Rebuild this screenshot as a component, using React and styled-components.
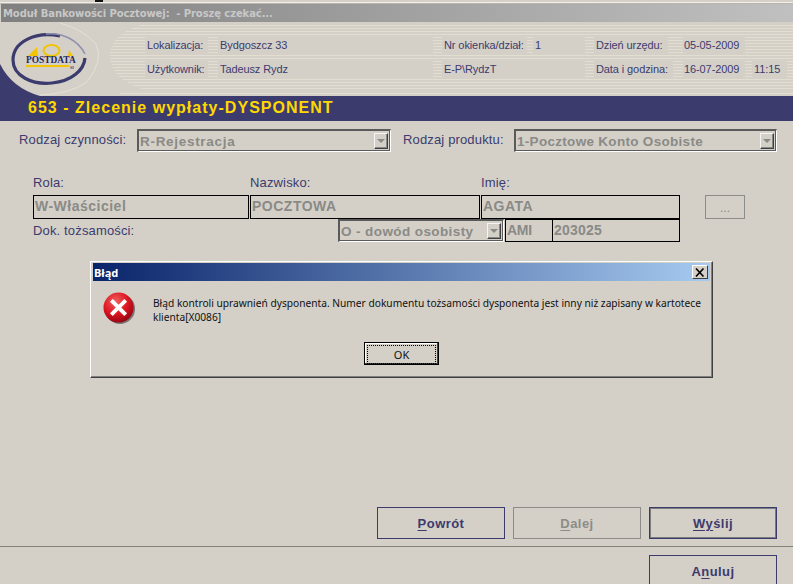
import React from "react";
import styled, { createGlobalStyle } from "styled-components";

const Global = createGlobalStyle`
  html, body { margin: 0; padding: 0; background: #d4d0c8; }
  #root { width: 793px; height: 584px; overflow: hidden; }
`;
const NAVY = "#3c3b6e";
const Page = styled.div`
  position: relative; width: 793px; height: 584px; overflow: hidden; background: #d4d0c8;
  font-family: "Liberation Sans", Arial, sans-serif; color: ${NAVY};
`;
const TopStrip = styled.div`
  position: relative; height: 4px; box-sizing: border-box; border-bottom: 1px solid #b8b5ae;
  background: linear-gradient(#d4d0c8 2px, #f2f0ec 2px);
`;
const StrayMark = styled.i`
  position: absolute; left: 95px; top: 0; width: 8px; height: 2px; background: #111;
`;
const TitleBar = styled.div`
  height: 18px; margin-left: 1px; padding-left: 2px; display: flex; align-items: center;
  background: linear-gradient(90deg, #808080, #c0c0c0);
  font: bold 10px "DejaVu Sans", sans-serif; color: #c8c8c8; white-space: pre; letter-spacing: -0.09px;
`;
const Header = styled.div`
  position: relative; height: 74px; box-sizing: border-box; padding: 15px 0 0 145px;
  display: flex; flex-direction: column; gap: 7px;
`;
const HeaderArt = styled.svg`
  position: absolute; left: 0; top: 0;
`;
const HeaderRow = styled.div`
  position: relative; display: grid; height: 17px; grid-template-columns: ${p => p.$cols}; font-size: 11px; line-height: 16px; letter-spacing: -0.1px;
`;
const Cell = styled.div`
  background: #d4d0c8; padding-left: ${p => p.$pad ?? 2}px; white-space: nowrap; grid-column: ${p => p.$col};
`;
const Banner = styled.div`
  height: 25px; background: ${NAVY}; color: #ffd800; font: bold 16px/24px "Liberation Sans", sans-serif;
  padding-left: 28px; letter-spacing: 1.02px; white-space: pre; box-sizing: border-box;
`;
const Form = styled.div`
  padding-top: 8px;
`;
const TopRow = styled.div`
  display: flex; align-items: center; height: 23px;
`;
const RowLabel = styled.label`
  font-size: 13px; width: ${p => p.$w}px; margin-left: ${p => p.$ml ?? 0}px; white-space: nowrap; padding-bottom: 2px; letter-spacing: 0.15px;
`;
const Select = styled.div`
  width: ${p => p.$w}px; height: 23px; box-sizing: border-box; display: flex; align-items: center; justify-content: space-between;
  border-style: solid; border-width: 2px 1px 1px 2px; border-color: #5a5a5a #fff #fff #5a5a5a;
  box-shadow: inset -1px -1px 0 #5a5a5a;
  color: #8a8a86; font: bold 13.5px "Liberation Sans", sans-serif; padding: 0 1px 0 1px; white-space: nowrap;
  letter-spacing: ${p => p.$ls ?? 0.3}px;
`;
const Arrow = styled.span`
  width: 14px; height: 16px; flex: none; box-sizing: border-box; display: flex; align-items: center; justify-content: center;
  margin-right: 1px; border: 1px solid; border-color: #f4f4f4 #404040 #404040 #f4f4f4; box-shadow: inset -1px -1px 0 #888;
  &::after { content: ""; border: 4px solid transparent; border-top: 4px solid #8a8a86; border-bottom: 0; }
`;
const Person = styled.div`
  margin: 23px 0 0 33px; display: grid; grid-template-columns: 216px 230px 199px 25px 40px; column-gap: 1px; row-gap: 0;
`;
const ColLabel = styled.div`
  font-size: 13px; height: 20px; line-height: 15px; letter-spacing: 0.15px;
`;
const Box = styled.div`
  height: ${p => p.$h ?? 24}px; box-sizing: border-box; border: 1px solid #000; color: #8a8a86;
  font: bold 14px/21px "Liberation Sans", sans-serif; padding-left: 1px; overflow: hidden; white-space: nowrap;
  width: ${p => (p.$w ? `${p.$w}px` : "auto")}; flex: none; letter-spacing: ${p => p.$ls ?? 0.5}px;
  margin-left: ${p => p.$ml ?? 0}px;
`;
const DotsButton = styled.div`
  grid-column: 5; width: 40px; height: 24px; box-sizing: border-box; border: 1px solid #8c8c88; margin-left: -2px;
  text-align: center; color: #8a8a86; font-size: 12px; line-height: 24px;
`;
const Spacer = styled.div``;
const DocRow = styled.div`
  margin-left: 33px; display: flex; align-items: flex-start; height: 23px;
`;
const DocLabel = styled(RowLabel)`
  width: 305px; line-height: 23px; padding: 0;
`;
const Group = styled.div`
  display: flex; margin-left: 1px;
`;
const Actions = styled.div`
  display: flex; justify-content: flex-end; gap: 8px; padding-right: 16px; margin-top: ${p => p.$mt ?? 0}px;
`;
const ActionButton = styled.div`
  width: 128px; height: 32px; box-sizing: border-box; flex: none; display: flex; align-items: center; justify-content: center;
  border: 1px solid ${p => (p.$off ? "#8c8c88" : NAVY)}; color: ${p => (p.$off ? "#8c8c88" : NAVY)};
  font: bold 13px "Liberation Sans", sans-serif; letter-spacing: 0.45px;
  box-shadow: ${p => (p.$main ? "inset 0 0 0 1px #7c7c80" : "none")};
  u { text-underline-offset: 2px; }
`;
const Rule = styled.hr`
  margin: 7px 0 8px; border: 0; border-top: 1px solid #85827a; height: 0; border-bottom: 0;
`;
const Dialog = styled.div`
  position: absolute; left: 90px; top: 261px; width: 623px; height: 117px; box-sizing: border-box; background: #d4d0c8;
  border: 1px solid; border-color: #fff #404040 #404040 #fff;
  box-shadow: inset -1px -1px 0 #808080;
  padding: 1px 2px 3px 1px; font: 11px "Noto Sans", sans-serif; color: #111;
`;
const DialogTitle = styled.div`
  height: 18px; display: flex; align-items: center; justify-content: space-between; padding: 0 2px 0 1px; margin-left: 1px;
  background: linear-gradient(90deg, #0a246a, #a6caf0); color: #fff; font: bold 11px "Noto Sans", sans-serif;
`;
const CloseBtn = styled.div`
  width: 16px; height: 14px; box-sizing: border-box; background: #d4d0c8; display: flex; align-items: center; justify-content: center;
  border: 1px solid; border-color: #fff #404040 #404040 #fff;
`;
const DialogBody = styled.div`
  display: flex; padding: 11px 0 0 11px; height: 52px; box-sizing: border-box;
`;
const DialogText = styled.div`
  margin: 4px 0 0 17px; font-size: 10.2px; line-height: 14px; width: 550px; white-space: nowrap;
`;
const DialogFoot = styled.div`
  display: flex; justify-content: center; margin-top: 9px; padding-left: 1px;
`;
const OkButton = styled.div`
  width: 75px; height: 23px; box-sizing: border-box; border: 1px solid #000; background: #d4d0c8; padding: 1px;
  box-shadow: inset -1px -1px 0 #404040, inset 1px 1px 0 #fff; font-size: 11px;
  span { display: flex; align-items: center; justify-content: center; height: 100%; box-sizing: border-box; margin: 1px; outline: 1px dotted #000; outline-offset: -1px; }
`;

const HeaderDrawing = () => (
  <HeaderArt width="793" height="74" viewBox="0 0 793 74">
    <defs>
      <pattern id="st" width="3" height="3" patternUnits="userSpaceOnUse">
        <rect width="3" height="3" fill="#d4d0c8" />
        <rect width="3" height="1" fill="#e2dfd2" />
      </pattern>
    </defs>
    <rect x="0" width="793" height="74" fill="#d4d0c8" />
    <path d="M148 1 H793 V69 H148 Q110 58 110 34 Q110 10 148 1Z" fill="url(#st)" />
    <rect x="120" y="71" width="673" height="1" fill="#e2dfd2" />
    <path d="M0 42 V74 H40 Q12 66 0 42Z" fill={NAVY} />
    <path d="M60 1 Q84 8 96 22 Q104 38 87 60 Q70 72 40 73" fill="none" stroke="#e4e1d6" strokeWidth="1" />
    <path d="M60 14 C35 9 13 20 13 38 C13 54 32 63 52 61 C72 59 84 48 85 36" fill="none" stroke={NAVY} strokeWidth="3.2" />
    <path d="M46 12 C62 10 78 18 85 32" fill="none" stroke="#8f8fae" strokeWidth="1.5" />
    <path d="M28 34 L37 25 L38 34Z M68 34 L69 28 L73 34Z" fill="#f2c500" />
    <ellipse cx="51.5" cy="28.5" rx="8" ry="5.5" fill="none" stroke="#f2c500" strokeWidth="2" />
    <text x="26" y="41" fontFamily="Liberation Serif" fontWeight="700" fontSize="9.4" fill="#26265e">POSTDATA</text>
    <rect x="26" y="43" width="43" height="2" fill="#f2c500" />
    <text x="70" y="47" fontFamily="Liberation Serif" fontWeight="700" fontSize="4" fill={NAVY}>SI</text>
  </HeaderArt>
);

const ErrorIcon = () => (
  <svg width="33" height="33" viewBox="0 0 34 34">
    <defs>
      <radialGradient id="red" cx="40%" cy="30%" r="75%">
        <stop offset="0" stopColor="#f06060" />
        <stop offset="0.55" stopColor="#dd1522" />
        <stop offset="1" stopColor="#8e0410" />
      </radialGradient>
    </defs>
    <circle cx="17.5" cy="17.5" r="15.5" fill="#777" />
    <circle cx="16" cy="16" r="15.5" fill="url(#red)" />
    <path d="M10 10 L22 22 M22 10 L10 22" stroke="#fff" strokeWidth="4" strokeLinecap="square" />
  </svg>
);

const Top = ({ cols, cells }) => (
  <HeaderRow $cols={cols}>
    {cells.map(([t, col, pad]) => <Cell key={t} $col={col} $pad={pad}>{t}</Cell>)}
  </HeaderRow>
);

export default function App() {
  return (
    <Page>
      <Global />
      <TopStrip><StrayMark /></TopStrip>
      <TitleBar>{"Moduł Bankowości Pocztowej:  - Proszę czekać..."}</TitleBar>
      <Header>
        <HeaderDrawing />
        <Top cols="63px 10px 215px 9px 85px 6px 52px 9px 74px 15px 62px" cells={[
          ["Lokalizacja:", 1], ["Bydgoszcz 33", 3, 2], ["Nr okienka/dział:", 5, 2], ["1", 7, 2], ["Dzień urzędu:", 9, 2], ["05-05-2009", 11, 1],
        ]} />
        <Top cols="63px 10px 215px 9px 143px 9px 79px 10px 62px 7px 35px" cells={[
          ["Użytkownik:", 1], ["Tadeusz Rydz", 3, 2], ["E-P\\RydzT", 5, 2], ["Data i godzina:", 7, 2], ["16-07-2009", 9, 1], ["11:15", 11, 2],
        ]} />
      </Header>
      <Banner>{"653 - Zlecenie wypłaty-DYSPONENT"}</Banner>
      <Form>
        <TopRow>
          <RowLabel $ml={19} $w={118}>Rodzaj czynności:</RowLabel>
          <Select $w={254} $ls={0.7}>R-Rejestracja<Arrow /></Select>
          <RowLabel $ml={12} $w={111}>Rodzaj produktu:</RowLabel>
          <Select $w={263}>1-Pocztowe Konto Osobiste<Arrow /></Select>
        </TopRow>
        <Person>
          <ColLabel>Rola:</ColLabel>
          <ColLabel>Nazwisko:</ColLabel>
          <ColLabel>Imię:</ColLabel>
          <Spacer />
          <Spacer />
          <Box>W-Właściciel</Box>
          <Box>POCZTOWA</Box>
          <Box>AGATA</Box>
          <DotsButton>...</DotsButton>
        </Person>
        <DocRow>
          <DocLabel>Dok. tożsamości:</DocLabel>
          <Select $w={166} $ls={0.4}>O - dowód osobisty<Arrow /></Select>
          <Group>
            <Box $w={48} $h={23} $ls={-0.3}>AMI</Box>
            <Box $w={128} $h={23} $ls={0.2} $ml={-1}>203025</Box>
          </Group>
        </DocRow>
        <Actions $mt={265}>
          <ActionButton><span><u>P</u>owrót</span></ActionButton>
          <ActionButton $off><span><u>D</u>alej</span></ActionButton>
          <ActionButton $main><span><u>Wy</u>ślij</span></ActionButton>
        </Actions>
        <Rule />
        <Actions>
          <ActionButton><span>A<u>n</u>uluj</span></ActionButton>
        </Actions>
      </Form>
      <Dialog>
        <DialogTitle>
          Błąd
          <CloseBtn>
            <svg width="10" height="9" viewBox="0 0 10 9"><path d="M1 0.5 L8.5 8.5 M8.5 0.5 L1 8.5" stroke="#000" strokeWidth="1.6" /></svg>
          </CloseBtn>
        </DialogTitle>
        <DialogBody>
          <ErrorIcon />
          <DialogText>
            Błąd kontroli uprawnień dysponenta. Numer dokumentu tożsamości dysponenta jest inny niż zapisany w kartotece<br />klienta[X0086]
          </DialogText>
        </DialogBody>
        <DialogFoot><OkButton><span>OK</span></OkButton></DialogFoot>
      </Dialog>
    </Page>
  );
}
